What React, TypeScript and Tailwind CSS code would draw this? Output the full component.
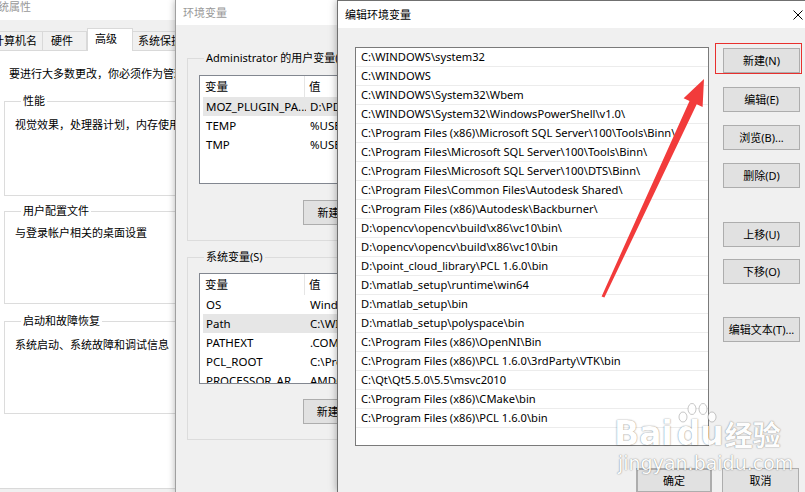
import React from "react";

const paths = [
  "C:\\WINDOWS\\system32",
  "C:\\WINDOWS",
  "C:\\WINDOWS\\System32\\Wbem",
  "C:\\WINDOWS\\System32\\WindowsPowerShell\\v1.0\\",
  "C:\\Program Files (x86)\\Microsoft SQL Server\\100\\Tools\\Binn\\",
  "C:\\Program Files\\Microsoft SQL Server\\100\\Tools\\Binn\\",
  "C:\\Program Files\\Microsoft SQL Server\\100\\DTS\\Binn\\",
  "C:\\Program Files\\Common Files\\Autodesk Shared\\",
  "C:\\Program Files (x86)\\Autodesk\\Backburner\\",
  "D:\\opencv\\opencv\\build\\x86\\vc10\\bin\\",
  "D:\\opencv\\opencv\\build\\x86\\vc10\\bin",
  "D:\\point_cloud_library\\PCL 1.6.0\\bin",
  "D:\\matlab_setup\\runtime\\win64",
  "D:\\matlab_setup\\bin",
  "D:\\matlab_setup\\polyspace\\bin",
  "C:\\Program Files (x86)\\OpenNI\\Bin",
  "C:\\Program Files (x86)\\PCL 1.6.0\\3rdParty\\VTK\\bin",
  "C:\\Qt\\Qt5.5.0\\5.5\\msvc2010",
  "C:\\Program Files (x86)\\CMake\\bin",
  "C:\\Program Files (x86)\\PCL 1.6.0\\bin",
];

const userVars = [
  { name: "MOZ_PLUGIN_PA...", value: "D:\\PDF\\plugins", selected: true },
  { name: "TEMP", value: "%USERPROFILE%\\AppData\\Local\\Temp" },
  { name: "TMP", value: "%USERPROFILE%\\AppData\\Local\\Temp" },
];

const sysVars = [
  { name: "OS", value: "Windows_NT" },
  { name: "Path", value: "C:\\WINDOWS\\system32", selected: true },
  { name: "PATHEXT", value: ".COM;.EXE;.BAT" },
  { name: "PCL_ROOT", value: "C:\\Program Files" },
  { name: "PROCESSOR_AR...", value: "AMD64" },
];

function Btn({ children, className = "" }: { children: React.ReactNode; className?: string }) {
  return (
    <button
      type="button"
      className={`h-[25px] flex items-center justify-center bg-[#e1e1e1] border border-[#adadad] text-[11px] leading-[14px] text-black whitespace-nowrap ${className}`}
    >
      {children}
    </button>
  );
}

function VarList({ rows, height }: { rows: { name: string; value: string; selected?: boolean }[]; height: string }) {
  return (
    <div className={`w-[260px] ${height} bg-white border border-[#828790] overflow-hidden text-[11.5px]`}>
      {/* header */}
      <div className="flex h-[21px] items-center">
        <div className="w-[105px] shrink-0 h-full flex items-center pl-[5px] border-r border-[#e5e5e5]">变量</div>
        <div className="pl-[4px]">值</div>
      </div>
      {rows.map((r) => (
        <div key={r.name} className="flex h-[19px] items-center pl-[3px]">
          <div className={`flex h-full items-center w-full ${r.selected ? "bg-[#e6e6e6]" : ""}`}>
            <div className="w-[103px] shrink-0 pl-[3px] whitespace-nowrap overflow-hidden">{r.name}</div>
            <div className="pl-[4px] whitespace-nowrap">{r.value}</div>
          </div>
        </div>
      ))}
    </div>
  );
}

export default function App() {
  return (
    <div className="relative w-[805px] h-[492px] overflow-hidden bg-[#f0f0f0] text-[11px] leading-[14px] text-black font-['Noto_Sans','Noto_Sans_CJK_SC',sans-serif]">
      {/* 系统属性 window */}
      <div className="absolute left-[-20px] top-0 w-[200px] h-[492px] bg-[#f0f0f0] flex flex-col">
        <div className="h-[20px] bg-white pl-[7px] text-[#999]">系统属性</div>
        <div className="h-[8px]" />
        <div className="flex items-end h-[22px] pl-[9px]">
          <div className="w-[54px] shrink-0 h-[19px] pl-[3px] flex items-center border border-b-0 border-[#d9d9d9] whitespace-nowrap">计算机名</div>
          <div className="w-[44px] shrink-0 h-[19px] pl-[8px] flex items-center border border-b-0 border-l-0 border-[#d9d9d9] whitespace-nowrap">硬件</div>
          <div className="relative z-10 -mb-px w-[46px] shrink-0 h-[23px] pl-[7px] pb-[2px] flex items-center bg-white border border-b-0 border-[#d9d9d9] whitespace-nowrap">高级</div>
          <div className="w-[60px] shrink-0 h-[19px] pl-[5px] flex items-center border border-b-0 border-l-0 border-[#d9d9d9] whitespace-nowrap">系统保护</div>
        </div>
        <div className="h-[439px] bg-white border-t border-b border-[#d9d9d9] pl-[24px] pt-[16px] flex flex-col">
          <div className="ml-[5px] whitespace-nowrap">要进行大多数更改，你必须作为管理员登录。</div>
          <fieldset className="mt-[13px] w-[300px] h-[102px] border border-[#dcdcdc] pl-[10px] pt-[10px]">
            <legend className="ml-[6px] px-[2px]">性能</legend>
            <div className="whitespace-nowrap">视觉效果，处理器计划，内存使用，以及虚拟内存</div>
          </fieldset>
          <fieldset className="mt-[8px] w-[300px] h-[100px] border border-[#dcdcdc] pl-[10px] pt-[8px]">
            <legend className="ml-[6px] px-[2px]">用户配置文件</legend>
            <div className="whitespace-nowrap">与登录帐户相关的桌面设置</div>
          </fieldset>
          <fieldset className="mt-[10px] w-[300px] h-[100px] border border-[#dcdcdc] pl-[10px] pt-[10px]">
            <legend className="ml-[6px] px-[2px]">启动和故障恢复</legend>
            <div className="whitespace-nowrap">系统启动、系统故障和调试信息</div>
          </fieldset>
        </div>
      </div>

      {/* 环境变量 window */}
      <div className="absolute left-[175px] top-0 w-[200px] h-[492px] bg-[#f0f0f0] border-l border-[#a0a0a0] shadow-[0_0_7px_rgba(0,0,0,0.3)] flex flex-col">
        <div className="h-[25px] shrink-0 bg-white pl-[7px] flex items-center text-[#999]">环境变量</div>
        <fieldset className="ml-[11px] mt-[26px] w-[300px] border border-[#dcdcdc] pl-[11px] pt-[10px] pb-[15px]">
          <legend className="ml-[5px] px-[2px] whitespace-nowrap">Administrator 的用户变量(U)</legend>
          <VarList rows={userVars} height="h-[109px]" />
          <Btn className="mt-[16px] ml-[104px] w-[75px]">新建(N)...</Btn>
        </fieldset>
        <fieldset className="ml-[11px] mt-[9px] w-[300px] border border-[#dcdcdc] pl-[11px] pt-[9px] pb-[15px]">
          <legend className="ml-[5px] px-[2px]">系统变量(S)</legend>
          <VarList rows={sysVars} height="h-[111px]" />
          <Btn className="mt-[15px] ml-[104px] w-[75px]">新建(W)...</Btn>
        </fieldset>
      </div>

      {/* 编辑环境变量 window */}
      <div className="absolute left-[337px] top-0 w-[484px] h-[492px] bg-[#f0f0f0] border-l border-t border-[#707070] shadow-[0_0_8px_rgba(0,0,0,0.35)] flex flex-col">
        <div className="h-[27px] shrink-0 bg-white flex items-center">
          <span className="pl-[7px]">编辑环境变量</span>
          <span className="ml-auto w-[46px] flex items-center justify-center">
            <svg width="10" height="10" viewBox="0 0 10 10">
              <path d="M0.5 0.5L9.5 9.5M9.5 0.5L0.5 9.5" stroke="#000" strokeWidth="1" />
            </svg>
          </span>
        </div>
        <div className="flex pl-[17px] pt-[19px]">
          <div className="w-[354px] h-[399px] bg-white border border-[#7a7a7a] text-[11.15px]">
            {paths.map((p) => (
              <div key={p} className="h-[19px] flex items-center pl-[5px] border-b border-[#ececec] whitespace-nowrap overflow-hidden">
                {p}
              </div>
            ))}
          </div>
          <div className="ml-[14px] flex flex-col pt-[1px]">
            <div className="relative">
              <Btn className="w-[77px]">新建(N)</Btn>
              <div className="absolute -left-[8px] -top-[5px] -right-[2px] -bottom-[1px] border border-[#e8302e]" />
            </div>
            <Btn className="w-[77px] mt-[14px]">编辑(E)</Btn>
            <Btn className="w-[77px] mt-[13px]">浏览(B)...</Btn>
            <Btn className="w-[77px] mt-[13px]">删除(D)</Btn>
            <Btn className="w-[77px] mt-[34px]">上移(U)</Btn>
            <Btn className="w-[77px] mt-[12px]">下移(O)</Btn>
            <Btn className="w-[77px] mt-[33px]">编辑文本(T)...</Btn>
          </div>
        </div>
        <div className="flex ml-[298px] mt-[22px] gap-[10px]">
          <Btn className="w-[76px] border-2 border-[#0078d7]">确定</Btn>
          <Btn className="w-[77px]">取消</Btn>
        </div>
      </div>

      {/* red arrow annotation */}
      <svg className="absolute left-0 top-0 pointer-events-none" width="805" height="492" viewBox="0 0 805 492">
        <polygon
          points="601.6,296.4 689.5,100.9 683.6,98.2 704,79 702.6,107 696.7,104.3 604.4,297.6"
          fill="#f23b3b"
        />
      </svg>

      {/* watermark */}
      <div className="absolute left-[614px] top-[400px] pointer-events-none text-white opacity-90 [text-shadow:0_0_1px_rgba(0,0,0,0.45),0_0_2px_rgba(0,0,0,0.25)]">
        <div className="flex items-end h-[52px]">
          <span className="text-[33px] leading-[36px] font-bold font-['DejaVu_Sans',sans-serif]">Bai</span>
          <span className="relative w-[44px] h-[50px] ml-[2px]">
            <svg className="absolute left-0 top-0" width="44" height="22" viewBox="0 0 44 22">
              <g fill="#fff" stroke="rgba(0,0,0,0.3)" strokeWidth="0.8">
                <ellipse cx="8" cy="15" rx="4" ry="5" />
                <ellipse cx="17" cy="7" rx="4" ry="5.5" />
                <ellipse cx="28" cy="7" rx="4" ry="5.5" />
                <ellipse cx="37" cy="15" rx="4" ry="5" />
              </g>
            </svg>
            <span className="absolute left-[2px] bottom-[0px] text-[33px] leading-[36px] font-bold font-['DejaVu_Sans',sans-serif]">du</span>
          </span>
          <span className="ml-[6px] text-[28px] leading-[36px] font-bold font-['Noto_Sans_CJK_SC',sans-serif]">经验</span>
        </div>
        <div className="ml-[4px] text-[19px] leading-[22px] font-['DejaVu_Sans',sans-serif]">jingyan.baidu.com</div>
      </div>
    </div>
  );
}
